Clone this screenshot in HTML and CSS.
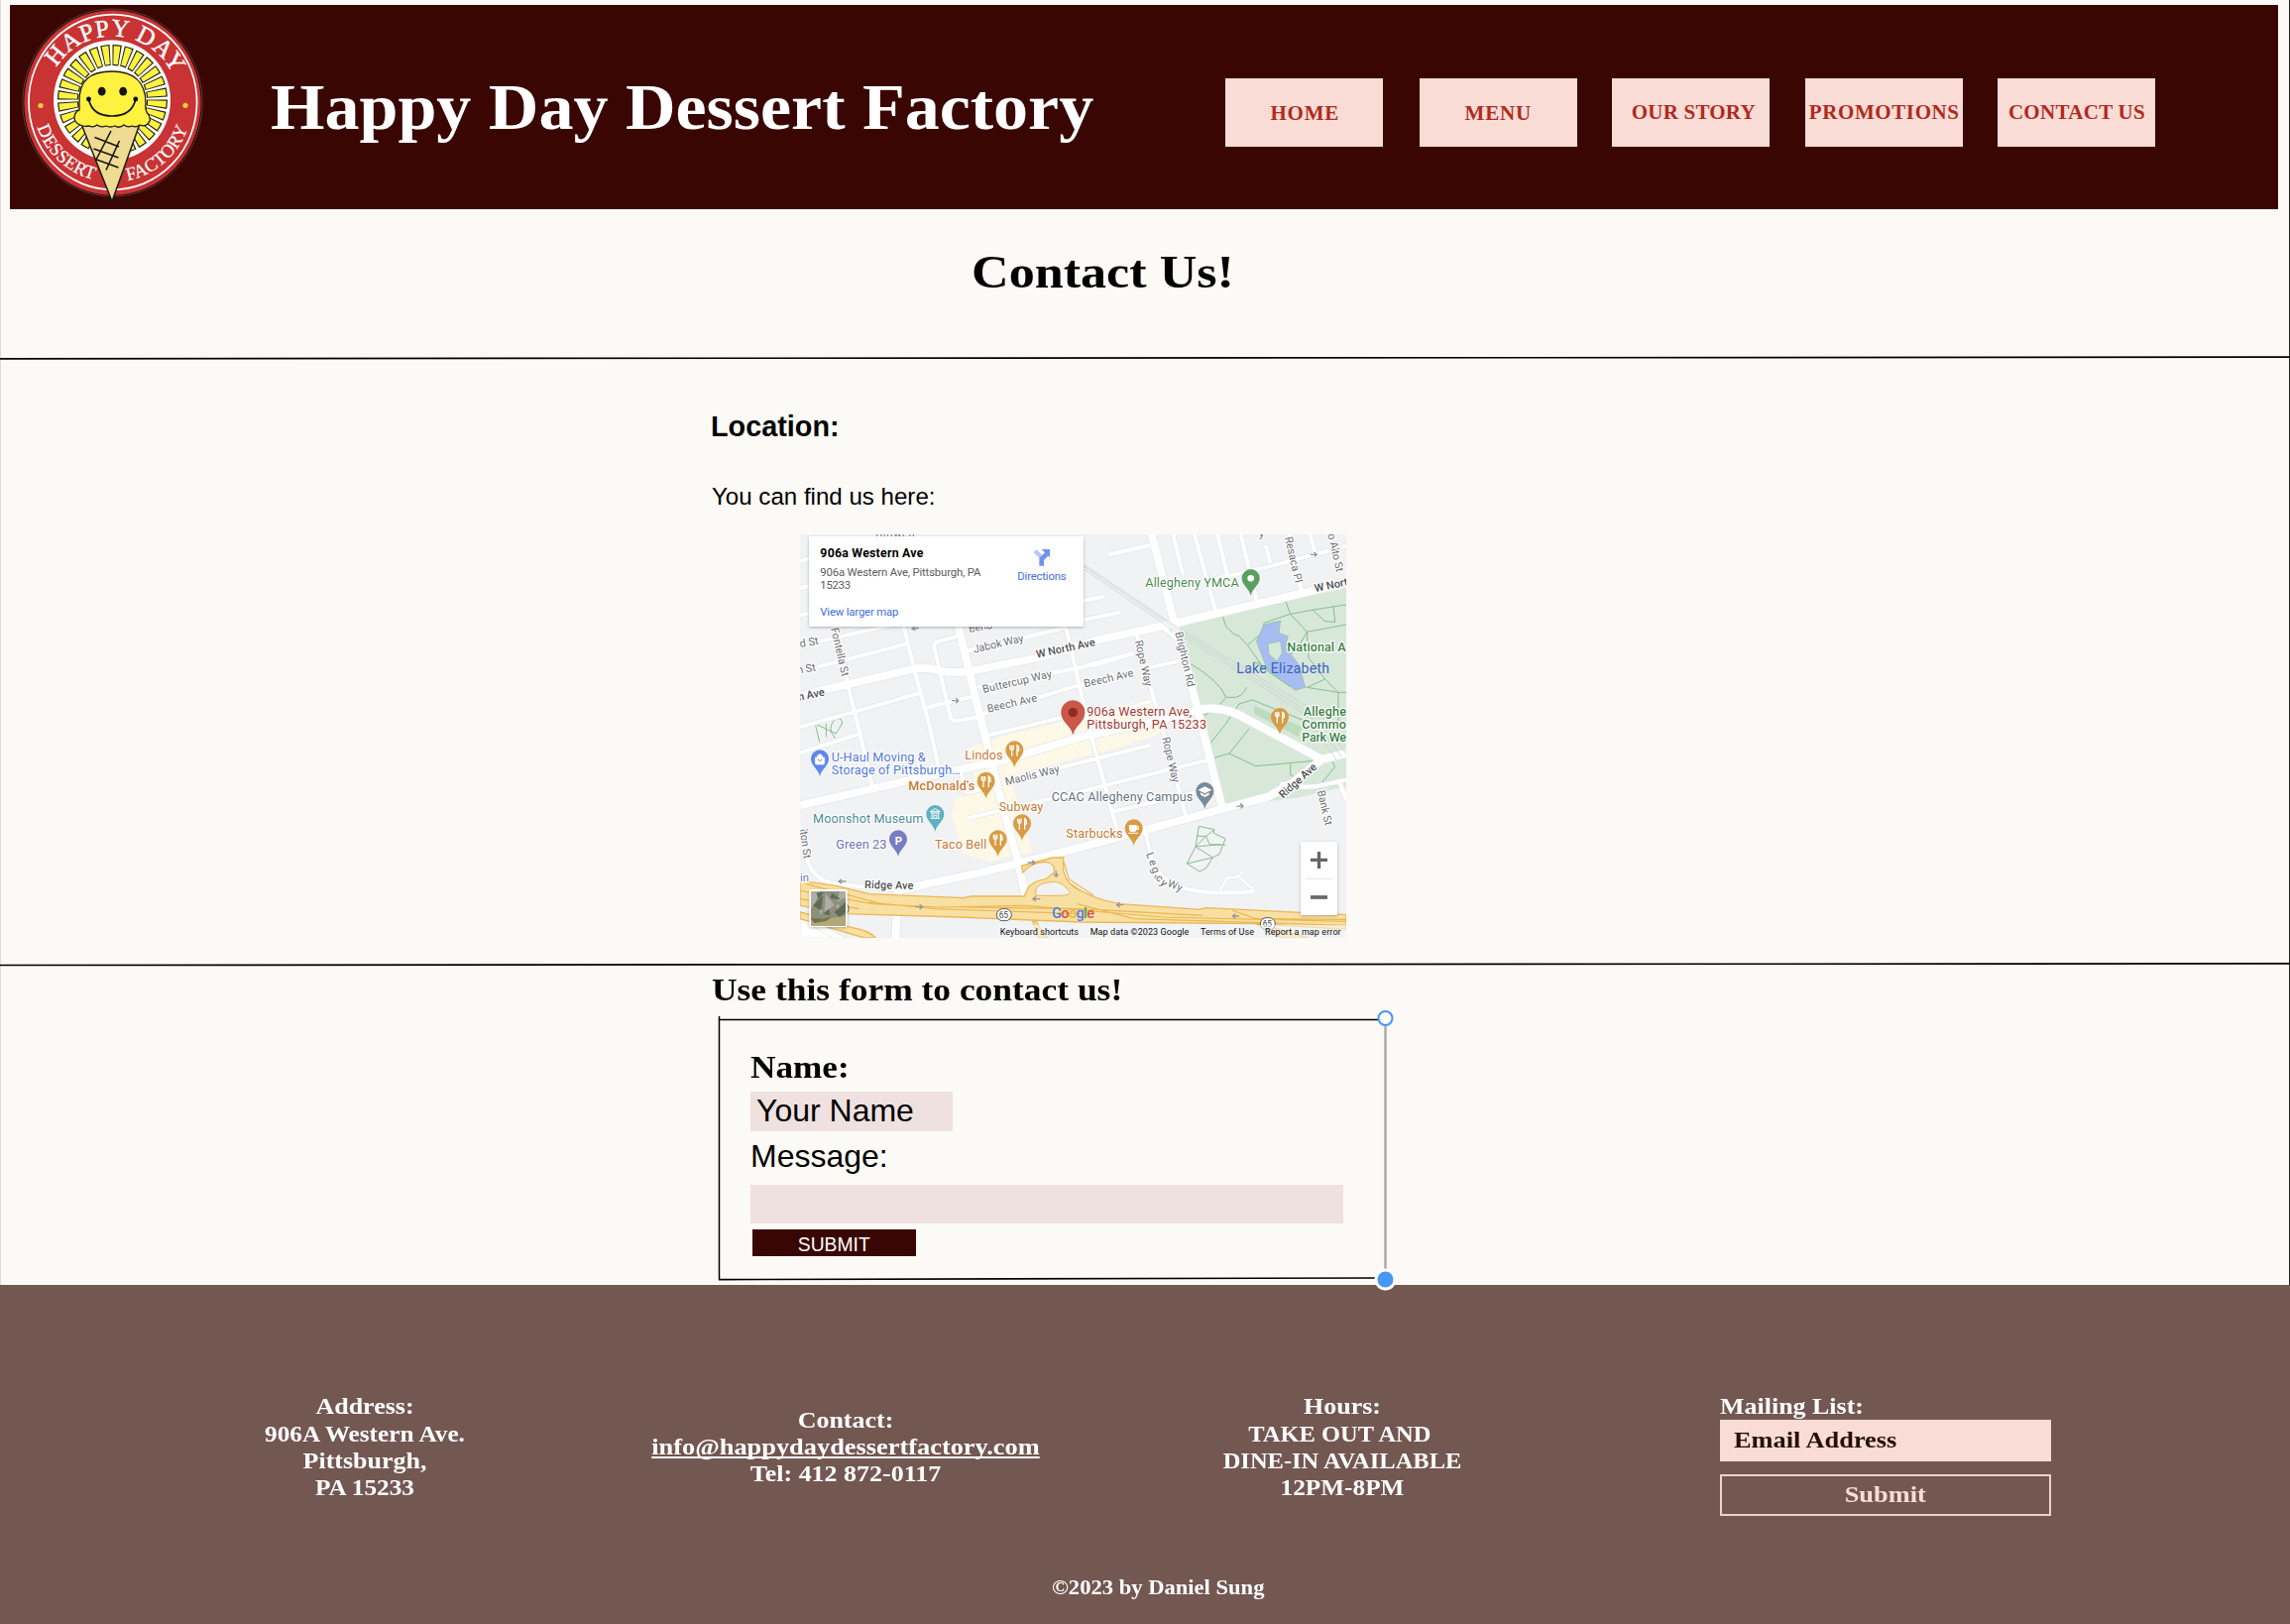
FILE: index.html
```html
<!DOCTYPE html>
<html lang="en">
<head>
<meta charset="utf-8">
<title>Happy Day Dessert Factory - Contact Us</title>
<link rel="stylesheet" href="styles.css">
</head>
<body>
<div class="page">
<header class="site-header">
  <svg class="logo" viewBox="22 7 184 198" role="img" aria-label="Happy Day Dessert Factory">
    <defs>
      <path id="arc-top" d="M56.7 68A67 67 0 0 1 174.2 75.2"/>
      <path id="arc-left" d="M37.4 128.2A80 80 0 0 0 95.5 181.4"/>
      <path id="arc-right" d="M128.8 182A80 80 0 0 0 189.6 128.2"/>
    </defs>
    <ellipse cx="113.5" cy="103.5" rx="90" ry="94" fill="#c93334" stroke="#1c0605" stroke-width="1.6"/>
    <ellipse cx="113.5" cy="103.5" rx="90.6" ry="94.5" fill="none" stroke="#8b7472" stroke-width=".5"/>
    <ellipse cx="113.8" cy="103" rx="84.8" ry="88.3" fill="none" stroke="#fff" stroke-width="1.7"/>
    <ellipse cx="113" cy="101" rx="59" ry="60.5" fill="#fff"/>
    <circle cx="113.5" cy="100.5" r="45" pathLength="280" class="rays-outline"/>
    <circle cx="113.5" cy="100.5" r="45" pathLength="280" class="rays"/>
    <path d="M82 125L113 203L141 125Z" fill="#efdc92" stroke="#1c1a10" stroke-width="1.5"/>
    <path d="M80 104C79 80 92 72 113 72S147 82 147 104Q146 112 150 116Q153 121 149 125Q146 128 141 126Q138 129 133 127Q129 129 125 126Q120 130 116 127Q111 129 107 127Q102 129 98 126Q94 129 90 127Q84 128 81 126Q75 124 75 118Q76 112 80 111Z" fill="#fdf240" stroke="#1c1a10" stroke-width="1.3"/>
    <ellipse cx="102.7" cy="92.2" rx="3.9" ry="4.4" fill="#17150c"/><ellipse cx="124.2" cy="92.2" rx="3.9" ry="4.4" fill="#17150c"/>
    <path d="M89.5 100Q93 117 113 117T136.8 100" fill="none" stroke="#17150c" stroke-width="1.7"/>
    <circle cx="89.5" cy="100" r="2.4"/><circle cx="136.8" cy="100" r="2.4"/>
    <path d="M112 132L96.5 162M120.5 142L107 171.5M95.5 138.5L120 148M94.5 150L119.5 159M97.5 161L119.5 169" fill="none" stroke="#17150c" stroke-width="1.6"/>
    <circle cx="41" cy="106.5" r="2.6" fill="#f6cf3a"/><circle cx="187" cy="106.3" r="2.6" fill="#f6cf3a"/>
    <text class="logo-top"><textPath href="#arc-top" textLength="143">HAPPY DAY</textPath></text>
    <text class="logo-bottom"><textPath href="#arc-left" textLength="81">DESSERT</textPath></text>
    <text class="logo-bottom"><textPath href="#arc-right" textLength="84">FACTORY</textPath></text>
  </svg>
  <div class="brand">Happy Day Dessert Factory</div>
  <nav class="nav">
    <a class="nav-link nav-home">HOME</a>
    <a class="nav-link nav-menu">MENU</a>
    <a class="nav-link nav-story">OUR STORY</a>
    <a class="nav-link nav-promo">PROMOTIONS</a>
    <a class="nav-link nav-contact">CONTACT US</a>
  </nav>
</header>

<main>
<section class="intro"><h1>Contact Us!</h1></section>
<svg class="divider" viewBox="0 0 2310 4" preserveAspectRatio="none"><path d="M0 2.8L2310 1.2"/></svg>

<section class="location">
  <h2>Location:</h2>
  <p>You can find us here:</p>
  <svg class="map" viewBox="21 27 1653 1221">
    <defs>
      <path id="pin" d="M0 0C-5-22-27-32-27-53A27 27 0 0 1 27-53C27-32 5-22 0 0Z"/>
      <g id="food" fill="none" stroke="#fff" stroke-width="4"><path d="M-8-70V-59M-3-70V-59M-13-70V-61Q-13-56-8-56T-3-61M-8-56V-37M8-37V-70Q14-68 13-54H8"/></g>
      <filter id="card-shadow"><feDropShadow dx="0" dy="3" stdDeviation="4" flood-opacity=".28"/></filter>
    </defs>
    <rect x="21" y="27" width="1653" height="1221" fill="#f1f2f4"/>
    <path class="commerce" d="M558 662L674 627L780 602L1085 522L1117 627L970 677L653 757L685 847L722 987L595 1017L516 992L480 877L490 827L558 807L530 677Z"/>
    <path class="park" d="M1165 300L1674 190V790L1520 825L1310 850Z"/>
    <path d="M1395 545L1540 610L1530 640L1395 570Z" fill="#bcdcbf"/>
    <g class="trails">
      <path d="M1300 275L1310 305Q1330 330 1350 335L1375 362L1420 425L1405 412M1375 362L1420 325L1425 295L1505 268L1490 228M1505 268Q1600 250 1674 240M1505 268L1555 322L1674 300M1555 322L1525 375L1480 410M1555 322L1560 400L1610 465L1555 490L1650 505V615M1610 465L1650 505H1674M1572 255L1610 290L1640 292L1635 245M1395 412L1500 485L1550 490"/>
      <path d="M1205 420Q1290 470 1310 520H1340Q1360 515 1373 490M1310 520Q1285 555 1235 580M1350 540L1310 600L1250 675M1350 540L1390 528L1545 590M1380 615L1320 690L1400 728L1580 712L1515 655M1250 710L1320 690M1505 722V755L1540 770L1590 730M1595 785L1640 730L1625 700"/>
      <path d="M1228 910L1275 920L1272 930L1308 948L1290 995L1270 1005L1250 1037L1230 1047L1192 1023L1218 972ZM1218 972L1250 940L1275 920M1222 940L1250 940L1260 965L1308 967M1218 972L1295 965M1218 972L1270 1005L1192 1023"/>
      <path d="M67 600L80 655M67 600L130 630L148 600Q150 580 130 585Q110 600 115 625L128 645M100 600V640"/>
    </g>
    <path d="M1425 300L1475 288L1470 325L1498 335L1490 370L1530 420L1550 490L1520 499L1435 435L1402 350ZM1437 358L1440 390L1465 411L1480 385L1475 350Z" fill="#a7bcf0" stroke="#8fbf98" stroke-width="2" fill-rule="evenodd"/>
    <g class="edge">
      <path class="w26" d="M500 305L575 615L625 815L680 1015L704 1125M21 515L160 482L370 433Q410 430 440 438Q480 450 540 440L740 400L920 347L1150 297L1575 197L1674 170M21 847L400 760L640 710L870 640L1130 585L1240 555Q1310 545 1380 590L1600 708L1674 690M1085 27L1155 300L1225 560L1300 860M310 1105L560 1052L870 974L1070 920L1310 855L1440 820L1510 780L1600 708M318 1105L310 1248"/>
      <path class="w14" d="M21 610L180 565L380 508M21 190L48 183M21 108L48 100M21 272L48 265M82 350L335 293M75 428L345 358M335 305L365 430L415 615L442 740M500 335L435 352Q422 358 430 380L475 575Q480 595 500 590L580 575M400 552L545 517M560 490L780 447L920 420L1030 387M530 378L830 308M120 300L165 480L200 620L240 790M570 572L860 485L960 465M1080 430L1170 410M825 305L865 480L895 610L980 920M21 688L197 632M505 740L525 808L620 790M530 885L870 805L1255 710M650 775L840 725L1080 665M970 865L1240 803M1040 330L1090 520L1125 640L1190 885M880 425L1030 387M960 570L1080 532M955 88L1080 60M860 230L940 215M860 290L990 263M1150 27L1180 150M1215 27L1280 265M1285 27L1315 155M1355 27L1405 235M1430 60L1445 115M1500 27L1538 195M1565 27L1580 85M1240 170L1420 130L1674 62M1120 310L1180 360M1655 780L1674 830M1475 780Q1510 795 1580 790L1674 770M1065 920L1085 1010Q1110 1080 1190 1100Q1290 1120 1395 1106M590 635L840 575"/>
      <path class="w9" d="M1290 1108L1315 1065H1340L1363 1050M1350 1065L1392 1100"/>
      <path class="w14" d="M21 900L35 990Q55 1075 130 1085L330 1105"/>
    </g>
    <g class="roads">
      <path class="w26" d="M500 305L575 615L625 815L680 1015L704 1125M21 515L160 482L370 433Q410 430 440 438Q480 450 540 440L740 400L920 347L1150 297L1575 197L1674 170M21 847L400 760L640 710L870 640L1130 585L1240 555Q1310 545 1380 590L1600 708L1674 690M1085 27L1155 300L1225 560L1300 860M310 1105L560 1052L870 974L1070 920L1310 855L1440 820L1510 780L1600 708M318 1105L310 1248"/>
      <path class="w14" d="M21 610L180 565L380 508M21 190L48 183M21 108L48 100M21 272L48 265M82 350L335 293M75 428L345 358M335 305L365 430L415 615L442 740M500 335L435 352Q422 358 430 380L475 575Q480 595 500 590L580 575M400 552L545 517M560 490L780 447L920 420L1030 387M530 378L830 308M120 300L165 480L200 620L240 790M570 572L860 485L960 465M1080 430L1170 410M825 305L865 480L895 610L980 920M21 688L197 632M505 740L525 808L620 790M530 885L870 805L1255 710M650 775L840 725L1080 665M970 865L1240 803M1040 330L1090 520L1125 640L1190 885M880 425L1030 387M960 570L1080 532M955 88L1080 60M860 230L940 215M860 290L990 263M1150 27L1180 150M1215 27L1280 265M1285 27L1315 155M1355 27L1405 235M1430 60L1445 115M1500 27L1538 195M1565 27L1580 85M1240 170L1420 130L1674 62M1120 310L1180 360M1655 780L1674 830M1475 780Q1510 795 1580 790L1674 770M1065 920L1085 1010Q1110 1080 1190 1100Q1290 1120 1395 1106M590 635L840 575"/>
      <path class="w9" d="M1290 1108L1315 1065H1340L1363 1050M1350 1065L1392 1100"/>
      <path class="w14" d="M21 900L35 990Q55 1075 130 1085L330 1105"/>
    </g>
    <path class="rail" d="M880 118L1160 306L1560 550L1674 690M880 124L1160 313L1552 560L1660 700M880 132L1150 316L1545 568L1645 710"/>
    <path d="M21 1175L160 1248H21ZM21 1190L120 1248" fill="#fff" stroke="#e2e4e8" stroke-width="2"/>
    <path class="highway" d="M21 1075L130 1090L230 1115L515 1127L540 1122L700 1122L712 1095Q730 1075 765 1070L790 1050Q795 1020 760 1018Q720 1020 695 1050L692 1030L785 1005H818V1045Q830 1090 870 1105L840 1085Q900 1130 990 1145L1230 1162L1250 1157L1674 1178V1222L1400 1205L870 1200L500 1185L160 1175L21 1150Z"/>
    <path class="highway" d="M21 1170Q120 1195 170 1215Q230 1225 250 1248H215L21 1190ZM735 1197L760 1240L775 1248H745L725 1197ZM1420 1207Q1500 1230 1560 1248H1480L1400 1205Z"/>
    <path d="M735 1100Q745 1080 790 1078Q815 1080 835 1105Q850 1120 800 1120H735Z" fill="#f1f2f4" stroke="#e9b554" stroke-width="3"/>
    <path class="lane" d="M21 1105L240 1145L440 1155L700 1150L1120 1185L1674 1198M230 1140L430 1160L870 1175M510 1155L870 1160L1240 1180M21 1130L200 1160M820 1020L835 1070L910 1120M40 1085L250 1140M860 1145L1030 1190L1674 1210M1330 1165L1400 1190L1674 1192"/>
    <g class="arrows"><path d="M160 1077H140M147 1070L138 1077L147 1084M370 1154H390M383 1147L392 1154L383 1161M710 1020H730M723 1013L732 1020L723 1027M748 1130H728M735 1123L726 1130L735 1137M1000 1148H982M989 1141L980 1148L989 1155M1350 1182H1332M1339 1175L1330 1182L1339 1189M1342 851L1360 848M1353 841L1362 849L1355 856M480 530H500M493 523L500 530L493 537M1565 88H1583M1576 81L1585 87L1578 94M796 1045V1060M789 1055L796 1063L803 1055M380 310L362 313M368 305L360 313L370 317"/></g>

    <g class="street">
      <text x="250" y="35" textLength="118">Bidwell</text>
      <text transform="translate(114 312) rotate(77)" textLength="150">Fontella St</text>
      <text transform="translate(22 369) rotate(-10)">d St</text>
      <text transform="translate(14 449) rotate(-10)">n St</text>
      <text transform="translate(533 324) rotate(-10)" textLength="72">Bend</text>
      <text transform="translate(548 386) rotate(-13)" textLength="155">Jabok Way</text>
      <text transform="translate(576 507) rotate(-13)" textLength="214">Buttercup Way</text>
      <text transform="translate(590 566) rotate(-13)" textLength="154">Beech Ave</text>
      <text transform="translate(883 490) rotate(-13)" textLength="153">Beech Ave</text>
      <text transform="translate(1034 350) rotate(77)" textLength="142">Rope Way</text>
      <text transform="translate(1156 324) rotate(77)" textLength="170">Brighton Rd</text>
      <text transform="translate(1488 37) rotate(77)" textLength="142">Resaca Pl</text>
      <text transform="translate(1618 27) rotate(77)" textLength="118">o Alto St</text>
      <text transform="translate(645 787) rotate(-14)" textLength="168">Maolis Way</text>
      <text transform="translate(1117 643) rotate(77)" textLength="140">Rope Way</text>
      <text transform="translate(1068 994) rotate(70)" textLength="88">Lega</text>
      <text transform="translate(1096 1068) rotate(48)" textLength="36">cy</text>
      <text transform="translate(1131 1091) rotate(22)" textLength="46">Wy</text>
      <text transform="translate(1586 804) rotate(77)" textLength="108">Bank St</text>
      <text transform="translate(20 920) rotate(82)" textLength="90">lton St</text>
      <text x="1410" y="37">y</text>
    </g>
    <g class="street major">
      <text transform="translate(738 401) rotate(-12)" textLength="182">W North Ave</text>
      <text transform="translate(1580 202) rotate(-12)">W North Ave</text>
      <text transform="translate(17 530) rotate(-11)">n Ave</text>
      <text x="216" y="1098" transform="rotate(1 216 1098)" textLength="148">Ridge Ave</text>
      <text transform="translate(1483 827) rotate(-42)" textLength="140">Ridge Ave</text>
    </g>

    <use href="#pin" x="1385" y="212" fill="#58a05f"/><circle cx="1385" cy="160" r="10" fill="#fff"/>
    <use href="#pin" x="81" y="759" fill="#5f86ee"/><path d="M67 702H95V719Q95 723 91 723H71Q67 723 67 719ZM73 702Q73 692 81 692T89 702" fill="#fff" stroke="#fff" stroke-width="2"/><path d="M74 708Q81 717 88 708" fill="none" stroke="#5f86ee" stroke-width="3"/>
    <use href="#pin" x="430" y="926" fill="#5fb0c3"/><path d="M415 866L430 857L445 866ZM417 870H443M420 870V884M426 884V875L430 879L434 875V884M440 870V884M416 886H444" fill="none" stroke="#fff" stroke-width="3"/>
    <use href="#pin" x="318" y="1002" fill="#777dc0"/><text x="308" y="965" class="parking">P</text>
    <use href="#pin" x="1246" y="857" fill="#788b98"/><path d="M1226 800L1246 790L1267 800L1246 811ZM1233 808L1246 815L1259 808V815L1246 822L1233 815Z" fill="#fff"/>
    <g fill="#d99b45"><use href="#pin" x="670" y="732"/><use href="#pin" x="584" y="826"/><use href="#pin" x="693" y="954"/><use href="#pin" x="620" y="1002"/><use href="#pin" x="1473" y="632"/><use href="#pin" x="1031" y="969"/></g>
    <use href="#food" x="670" y="735"/><use href="#food" x="584" y="829"/><use href="#food" x="693" y="957"/><use href="#food" x="620" y="1005"/><use href="#food" x="1473" y="635"/>
    <path d="M1018 908H1039V918Q1039 926 1031 926H1026Q1018 926 1018 918ZM1039 911H1045V919H1039M1015 931H1044" fill="#fff" stroke="#fff" stroke-width="3"/><path d="M1041 913H1044V916" fill="none" stroke="#d99b45" stroke-width="2"/>
    <path d="M847 631C842 606 812 595 812 565A35 35 0 0 1 882 565C882 595 852 606 847 631Z" fill="#cb5748" stroke="#b04236" stroke-width="2"/><circle cx="847" cy="566" r="14" fill="#8f2a24"/>

    <g class="poi">
      <text x="1066" y="187" textLength="283" fill="#4a8b51">Allegheny YMCA</text>
      <text x="1342" y="446" textLength="281" fill="#3c62c4" class="lake">Lake Elizabeth</text>
      <g fill="#3c8046" class="bold"><text x="1495" y="381" textLength="178">National A</text><text x="1544" y="577" textLength="130">Alleghe</text><text x="1540" y="616" textLength="134">Commo</text><text x="1540" y="653" textLength="134">Park We</text></g>
      <g fill="#a33830"><text x="889" y="575" textLength="318">906a Western Ave,</text><text x="889" y="614" textLength="362">Pittsburgh, PA 15233</text></g>
      <g fill="#527ada"><text x="116" y="714" textLength="285">U-Haul Moving &amp;</text><text x="116" y="753" textLength="390">Storage of Pittsburgh…</text></g>
      <g fill="#c77a31"><text x="520" y="708" textLength="115">Lindos</text><text x="349" y="801" textLength="201" class="bold">McDonald's</text><text x="623" y="863" textLength="134">Subway</text><text x="429" y="978" textLength="157">Taco Bell</text><text x="826" y="945" textLength="172">Starbucks</text></g>
      <text x="60" y="900" textLength="334" fill="#4b8d98">Moonshot Museum</text>
      <text x="130" y="978" textLength="153" fill="#6c70b8">Green 23</text>
      <text x="782" y="834" textLength="428" fill="#63737f">CCAC Allegheny Campus</text>
      <text x="21" y="1076" fill="#6c70b8" font-size="34">in</text>
    </g>

    <g class="shield"><rect x="616" y="1160" width="45" height="36" rx="18"/><text x="623" y="1187">65</text><rect x="1414" y="1187" width="45" height="36" rx="18"/><text x="1421" y="1214">65</text><path d="M160 1143Q177 1160 160 1177" fill="none"/></g>
    <text x="783" y="1188" class="google" textLength="129"><tspan fill="#4c7fe8">G</tspan><tspan fill="#d8534a">o</tspan><tspan fill="#efb93d">o</tspan><tspan fill="#4c7fe8">g</tspan><tspan fill="#50a35e">l</tspan><tspan fill="#d8534a">e</tspan></text>

    <rect x="618" y="1209" width="1056" height="39" fill="#f5f5f5" opacity=".6"/>
    <g class="attribution"><text x="626" y="1238" textLength="238">Keyboard shortcuts</text><text x="899" y="1238" textLength="299">Map data ©2023 Google</text><text x="1233" y="1238" textLength="162">Terms of Use</text><text x="1428" y="1238" textLength="230">Report a map error</text></g>

    <g filter="url(#card-shadow)"><rect x="48" y="33" width="831" height="273" rx="4" fill="#fff"/><rect x="1536" y="957" width="111" height="222" rx="4" fill="#fff"/><rect x="49" y="1101" width="115" height="114" rx="6" fill="#fff"/></g>
    <rect x="54" y="1107" width="105" height="104" fill="#8b8f7c"/>
    <path d="M54 1107L80 1107L68 1140L54 1160ZM98 1112L125 1150L95 1170ZM140 1107H159V1125L135 1140ZM75 1150L90 1165L84 1180ZM128 1150L140 1146L138 1164Z" fill="#aeaea6"/>
    <path d="M60 1150L90 1120L85 1165ZM118 1112L145 1132L112 1128ZM125 1170L159 1140L159 1172L140 1185ZM92 1175L108 1160L112 1180ZM70 1112L92 1109L78 1130Z" fill="#5f6b55"/>
    <path d="M54 1195L159 1182V1211H54Z" fill="#b3a677"/><path d="M54 1188L90 1190L118 1184L100 1197L64 1203Z" fill="#747350"/>
    <path d="M1566 1012H1617M1591.500 987V1038" stroke="#666" stroke-width="10"/><path d="M1566 1125H1617" stroke="#666" stroke-width="11"/><path d="M1551 1069H1633" stroke="#e6e6e6" stroke-width="3"/>
    <text x="82" y="96" textLength="312" class="card-title">906a Western Ave</text>
    <g class="card-text" fill="#5c5c5c"><text x="82" y="153" textLength="486">906a Western Ave, Pittsburgh, PA</text><text x="82" y="192" textLength="92">15233</text></g>
    <g class="card-text" fill="#4470df"><text x="82" y="272" textLength="237">View larger map</text><text x="679" y="165" textLength="148">Directions</text></g>
    <path d="M732 77L752 96" stroke="#b9c9f8" stroke-width="13"/><path d="M752 122V102L768 86" fill="none" stroke="#6d93ef" stroke-width="14"/><path d="M752 72H777V97Z" fill="#6d93ef"/>
  </svg>
</section>
<svg class="divider" viewBox="0 0 2310 4" preserveAspectRatio="none"><path d="M0 2.500L2310 .9"/></svg>

<section class="contact">
  <h2>Use this form to contact us!</h2>
  <form class="contact-form">
    <label class="name-label">Name:</label>
    <div class="name-field">Your Name</div>
    <label class="message-label">Message:</label>
    <div class="message-field"></div>
    <div class="send">SUBMIT</div>
    <svg class="frame" viewBox="720 1012 690 292">
      <path d="M725.500 1025V1290.800" stroke="#000" stroke-width="1.500"/>
      <path d="M725 1028.500H1392" stroke="#000" stroke-width="1.600"/>
      <path d="M725 1290.600L1392 1289" stroke="#000" stroke-width="1.600"/>
      <path d="M1397.500 1034V1280" stroke="#a9a9a9" stroke-width="2.400"/>
      <circle cx="1397.500" cy="1027" r="7" fill="#fff" stroke="#4597f8" stroke-width="2"/>
      <circle cx="1397.500" cy="1290.500" r="9.500" fill="#4597f8" stroke="#fff" stroke-width="3"/>
    </svg>
  </form>
</section>
</main>

<footer class="site-footer">
  <div class="footer-columns">
    <div class="col address"><div class="wide-l">Address:</div><div class="wide-m">906A Western Ave.</div><div class="wide-l">Pittsburgh,</div><div class="wide-m">PA 15233</div></div>
    <div class="col reach"><div class="wide-l">Contact:</div><div class="wide-xl"><a class="mail">info@happydaydessertfactory.com</a></div><div class="wide-l">Tel: 412 872-0117</div></div>
    <div class="col hours"><div class="wide-l">Hours:</div><div class="wide-s take">TAKE OUT AND</div><div class="wide-s">DINE-IN AVAILABLE</div><div class="wide-m">12PM-8PM</div></div>
    <div class="col mailing"><div class="wide-l from-left">Mailing List:</div><div class="email"><div class="wide-xl from-left">Email Address</div></div><div class="subscribe"><div class="wide-xl">Submit</div></div></div>
  </div>
  <div class="copyright"><div class="wide-m from-left">©2023 by Daniel Sung</div></div>
</footer>
</div>
</body>
</html>
```
FILE: styles.css
```css
* { box-sizing: border-box; }
body { margin: 0; background: #fcfaf6; color: #000; font-family: "Liberation Serif", "Times New Roman", serif; }
h1, h2, p { margin: 0; }
.page { width: 2310px; height: 1638px; display: flex; flex-direction: column; overflow: hidden; box-shadow: inset 1px 0 #dedcd9, inset -1px 0 #222; }

/* the display serif is set slightly extended */
.wide-s { transform: scaleX(1.042); }
.wide-m { transform: scaleX(1.075); }
.wide-l { transform: scaleX(1.105); }
.wide-xl { transform: scaleX(1.122); }
.wide-s, .wide-m, .wide-l, .wide-xl { transform-origin: center; }
.from-left { transform-origin: left; }

.site-header { display: flex; align-items: flex-start; height: 205.5px; margin: 5px 12px 0 10px; background: #3a0603; flex: none; }
.logo { width: 184px; height: 198px; margin: 2px 0 0 12px; flex: none; }
.rays-outline { fill: none; stroke: #24220f; stroke-width: 21; stroke-dasharray: 7.6 2.4; }
.rays { fill: none; stroke: #fdf240; stroke-width: 18.6; stroke-dasharray: 5.6 4.4; stroke-dashoffset: -1; }
.logo-top, .logo-bottom { fill: #fff; font-family: "Liberation Serif", serif; }
.logo-top { font-size: 25px; stroke: #fff; stroke-width: .4; }
.logo-bottom { font-size: 18.5px; stroke: #fff; stroke-width: .2; }
.brand { width: 850px; margin: 63px 0 0 67px; color: #fff; font-size: 65px; line-height: 80px; font-weight: bold; white-space: nowrap; flex: none; transform: scaleX(1.077); transform-origin: left; }
.nav { display: grid; grid-template-columns: 196px 194px 195.4px 193.8px 158.6px; margin: 74px 0 0 113px; }
.nav-link { width: 158.6px; height: 69px; background: #f9dcd6; color: #b02a1c; font-size: 21px; font-weight: bold; line-height: 69px; text-align: center; white-space: nowrap; }
.nav-home, .nav-menu { letter-spacing: .8px; line-height: 71px; padding-left: 2px; }
.nav-menu { padding-left: 0; }
.nav-story { letter-spacing: .2px; line-height: 69px; padding-left: 6px; }
.nav-promo { letter-spacing: .6px; }
.nav-contact { letter-spacing: .3px; padding-left: 1px; }

.intro { height: 148.5px; padding: 33.5px 0 0 980px; }
.intro h1 { font-size: 47px; line-height: 60px; transform: scaleX(1.109); transform-origin: left; }
.divider { display: block; width: 2310px; height: 4px; }
.divider path { stroke: #000; stroke-width: 1.7; }

.location { height: 608px; padding: 47px 0 0 717px; font-family: "Liberation Sans", Arial, sans-serif; }
.location h2 { font-size: 28.8px; line-height: 40px; }
.location p { margin: 35.5px 0 0 1px; font-size: 24.1px; line-height: 30px; }
.map { display: block; width: 551px; height: 407px; margin: 23.5px 0 0 90px; font-family: Roboto, sans-serif; }
.commerce { fill: #fef8e6; }
.park { fill: #d7e8d9; }
.rail { fill: none; stroke: #cdd0d2; stroke-width: 2.5; }
.trails { fill: none; stroke: #86bd8c; stroke-width: 3; }
.roads, .edge { fill: none; stroke-linejoin: round; }
.roads { stroke: #fff; }
.edge { stroke: #e3e5e7; }
.roads .w26 { stroke-width: 24; }
.roads .w14 { stroke-width: 12; }
.roads .w9 { stroke-width: 7; }
.edge .w26 { stroke-width: 28; }
.edge .w14 { stroke-width: 16; }
.edge .w9 { stroke-width: 10; }
.highway { fill: #f8e0a2; stroke: #ebb755; stroke-width: 4; }
.lane { fill: none; stroke: #ebb755; stroke-width: 3.500; }
.arrows { fill: none; stroke: #96969f; stroke-width: 4; }
.street text, .poi text { paint-order: stroke; stroke: #fff; stroke-width: 7px; stroke-linejoin: round; }
.street { font-size: 33px; fill: #6b6e73; }
.major { fill: #4b4d50; font-weight: 500; }
.poi { font-size: 38px; }
.poi .lake { font-size: 42px; stroke: none; }
.bold { font-weight: 500; }
.parking { font-size: 34px; font-weight: 700; fill: #fff; }
.shield { font-size: 25px; fill: #444; }
.shield rect, .shield path { fill: #fff; stroke: #555; stroke-width: 3; }
.google { font-size: 44px; font-weight: 500; }
.attribution { font-size: 27px; fill: #111; }
.card-title { font-size: 37px; font-weight: 700; }
.card-text { font-size: 34px; }

.contact { height: 321.3px; padding: 3px 0 0 718px; }
.contact h2 { font-size: 32px; line-height: 40px; transform: scaleX(1.107); transform-origin: left; }
.contact-form { position: relative; width: 672px; height: 262px; margin: 10px 0 0 7px; padding: 29.5px 0 0 32px; }
.frame { position: absolute; left: -5px; top: -16px; width: 690px; height: 292px; }
.contact-form label { display: block; font-size: 32px; line-height: 36px; }
.contact-form .name-label { font-weight: bold; transform: scaleX(1.1); transform-origin: left; }
.name-field, .message-label, .send { font-family: "Liberation Sans", Arial, sans-serif; }
.name-field { width: 203.5px; height: 40.500px; margin-top: 7px; padding-left: 6px; background: #efe1e0; font-size: 32px; line-height: 38px; }
.message-label { margin-top: 7.2px; }
.message-field { width: 598px; height: 39px; margin-top: 10.8px; background: #efe1e0; }
.send { width: 165.500px; height: 27.5px; margin: 6px 0 0 1.500px; background: #3a0603; color: #fff; font-size: 19.3px; line-height: 31px; text-align: center; }

.site-footer { flex: 1; padding-top: 109px; background: #735751; color: #fff; font-size: 23.5px; font-weight: bold; line-height: 27.2px; }
.footer-columns { display: flex; align-items: flex-start; height: 181.3px; }
.col { flex: none; text-align: center; white-space: nowrap; }
.address { width: 224px; margin-left: 256px; }
.reach { width: 416px; margin: 13.3px 0 0 165px; }
.mail { text-decoration: underline; text-decoration-thickness: 2px; text-underline-offset: 2px; text-decoration-skip-ink: none; }
.hours { width: 260px; margin-left: 163px; }
.take { padding-right: 5px; }
.mailing { width: 333.5px; margin-left: 251px; text-align: left; }
.email { height: 42.5px; margin-top: -.6px; padding-left: 14px; background: #f9dcd6; color: #260f0b; line-height: 41px; }
.subscribe { height: 42px; margin-top: 12.5px; border: 2px solid #f0d2cb; color: #f9dcd6; line-height: 36px; text-align: center; }
.copyright { padding-left: 1061px; font-size: 21px; line-height: 28px; }
```
